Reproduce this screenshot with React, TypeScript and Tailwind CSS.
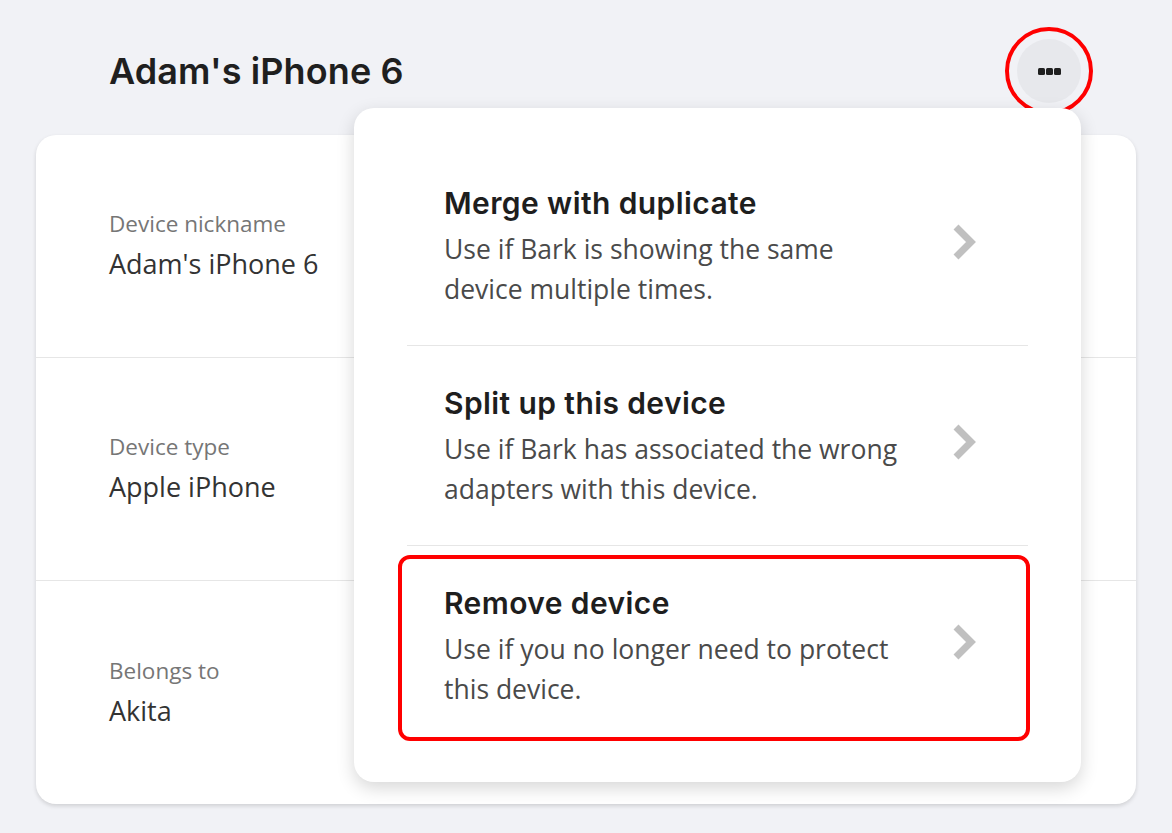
import { ReactNode } from 'react'

const heading = "font-['Inter',sans-serif]"
const body = "font-['Open_Sans',sans-serif]"

function Chevron() {
  return (
    <svg width="28" height="40" viewBox="0 0 28 40" className="shrink-0 -mt-[10px]">
      <polyline points="5,5 20,20 5,35" fill="none" stroke="#c0c0c0" strokeWidth="7" strokeLinejoin="miter" />
    </svg>
  )
}

function MenuItem({ title, children, highlight }: { title: string; children: ReactNode; highlight?: boolean }) {
  return (
    <div className="relative flex items-center justify-between pl-[37px] pr-[49px] pt-[39px] pb-[36px]">
      <div>
        <p className={`${heading} text-[30px] leading-[36px] font-semibold tracking-[0.4px] text-[#1e1e1e]`}>{title}</p>
        <p className={`${body} mt-2 text-[26.5px] leading-[40px] text-[#4a4a4a] w-[466px]`}>{children}</p>
      </div>
      <Chevron />
      {highlight && (
        <div className="absolute left-[-9px] right-[-2px] top-[9px] bottom-[4px] border-4 border-[#ff0000] rounded-[12px]" />
      )}
    </div>
  )
}

export default function App() {
  const rows = [
    { label: 'Device nickname', value: "Adam's iPhone 6" },
    { label: 'Device type', value: 'Apple iPhone' },
    { label: 'Belongs to', value: 'Akita' },
  ]

  return (
    <div className="min-h-screen bg-[#f1f2f6] px-[36px] pt-[39px]">
      {/* Header */}
      <div className="relative flex items-center justify-between h-[64px] pl-[73px] pr-[55px]">
        <h1 className={`${heading} text-[36px] font-semibold tracking-[0.1px] text-[#1f1f1f]`}>Adam's iPhone 6</h1>
        <div className="relative">
          <button className="w-16 h-16 rounded-full bg-[#e7e8ec] flex items-center justify-center gap-[1px]">
            <span className="w-[7px] h-[7px] rounded-[1.5px] bg-[#1f1f1f]" />
            <span className="w-[7px] h-[7px] rounded-[1.5px] bg-[#1f1f1f]" />
            <span className="w-[7px] h-[7px] rounded-[1.5px] bg-[#1f1f1f]" />
          </button>
          <div className="absolute -inset-3 rounded-full border-4 border-[#ff0000]" />
        </div>

        {/* Menu */}
        <div className="absolute right-[55px] top-[69px] z-10 w-[727px] bg-white rounded-[20px] shadow-[0_6px_18px_rgba(0,0,0,0.16)] px-[53px] pt-[38px] pb-[37px]">
          <MenuItem title="Merge with duplicate">Use if Bark is showing the same device multiple times.</MenuItem>
          <div className="h-px bg-[#e6e6e6]" />
          <MenuItem title="Split up this device">Use if Bark has associated the wrong adapters with this device.</MenuItem>
          <div className="h-px bg-[#e6e6e6]" />
          <MenuItem title="Remove device" highlight>Use if you no longer need to protect this device.</MenuItem>
        </div>
      </div>

      {/* Details card */}
      <div className="mt-[32px] bg-white rounded-[20px] shadow-[0_2px_4px_rgba(0,0,0,0.14)]">
        {rows.map((row, idx) => (
          <div
            key={row.label}
            className={`h-[223px] flex flex-col justify-center pl-[73px] ${idx < rows.length - 1 ? 'border-b border-[#e6e6e6]' : ''}`}
          >
            <p className={`${body} text-[22.5px] leading-[32px] text-[#767676]`}>{row.label}</p>
            <p className={`${body} text-[27px] leading-[40px] mt-[4px] text-[#333333]`}>{row.value}</p>
          </div>
        ))}
      </div>
    </div>
  )
}
